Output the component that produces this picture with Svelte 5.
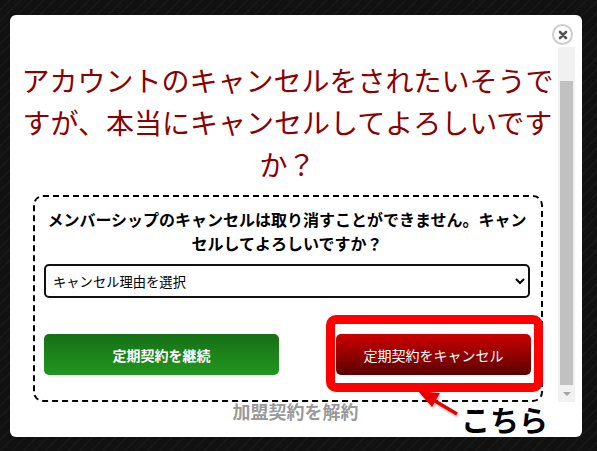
<script lang="ts">
  let reason = $state('');
</script>

<div class="overlay">
  <div class="modal">
    <div class="content">
      <h2>アカウントのキャンセルをされたいそうですが、本当にキャンセルしてよろしいですか？</h2>
      <div class="confirm-box">
        <p>メンバーシップのキャンセルは取り消すことができません。キャンセルしてよろしいですか？</p>
        <select bind:value={reason}>
          <option value="">キャンセル理由を選択</option>
        </select>
        <div class="actions">
          <button class="btn keep">定期契約を継続</button>
          <button class="btn cancel">定期契約をキャンセル</button>
        </div>
      </div>
      <div class="terminate">加盟契約を解約</div>
    </div>
    <div class="scrollbar">
      <div class="thumb"></div>
      <div class="arrow-down"></div>
    </div>

    <button class="close" aria-label="閉じる">
      <svg width="12" height="12" viewBox="0 0 12 12">
        <path d="M3 3 L9 9 M9 3 L3 9" stroke="#555" stroke-width="2.6" stroke-linecap="round" />
      </svg>
    </button>

    <div class="highlight"></div>
    <svg class="pointer" width="44" height="32" viewBox="0 0 44 32">
      <path d="M40 27 L13 11" stroke="#e60000" stroke-width="3.5" />
      <path d="M1 4 L23 6 L15 20 Z" fill="#e60000" />
    </svg>
    <span class="here">こちら</span>
  </div>
</div>

<style>
  :global(body) {
    margin: 0;
    background: #111;
  }
  .overlay {
    box-sizing: border-box;
    height: 451px;
    padding: 15px 15px 14px 10px;
    background: repeating-linear-gradient(135deg, #111 0 6px, #171717 6px 8px);
    font-family: "Noto Sans CJK JP", "Liberation Sans", sans-serif;
  }
  .modal {
    position: relative;
    display: flex;
    height: 100%;
    padding: 32px 7px 35px 10px;
    box-sizing: border-box;
    background: #fff;
    border-radius: 6px;
  }
  .content {
    flex: 1;
    min-width: 0;
    padding-top: 12px;
  }
  h2 {
    margin: 0;
    padding-right: 3px;
    font-size: 28px;
    font-weight: 400;
    line-height: 42px;
    color: #8b0000;
    text-align: center;
  }
  .confirm-box {
    box-sizing: border-box;
    width: 510px;
    height: 207px;
    margin: 10px 0 0 13px;
    padding: 10px 11px 0 9px;
    border: 2px dashed #000;
    border-radius: 10px;
  }
  p {
    margin: 0;
    font-size: 16px;
    font-weight: 700;
    line-height: 24px;
    color: #000;
    text-align: center;
  }
  select {
    display: block;
    box-sizing: border-box;
    width: 100%;
    height: 34px;
    margin-top: 9px;
    padding: 0 3px;
    border: 2px solid #111;
    border-radius: 5px;
    background: #fff;
    color: #000;
    font-family: inherit;
    font-size: 13.3px;
  }
  .actions {
    display: flex;
    justify-content: space-between;
    margin: 36px -1px 0 0;
  }
  .btn {
    height: 41px;
    padding: 0;
    border: 0;
    border-radius: 5px;
    color: #fff;
    font-family: inherit;
    font-size: 14px;
  }
  .keep {
    width: 235px;
    background: linear-gradient(#167016, #22961f);
    font-weight: 700;
  }
  .cancel {
    width: 195px;
    background: linear-gradient(#cc0000, #5a0000);
  }
  .terminate {
    margin-top: -1px;
    padding-left: 13px;
    font-size: 18px;
    font-weight: 700;
    line-height: 20px;
    color: #999;
    text-align: center;
  }
  .scrollbar {
    position: relative;
    flex: none;
    width: 17px;
    background: #f1f1f1;
  }
  .thumb {
    position: absolute;
    top: 34px;
    left: 2px;
    width: 13px;
    height: 304px;
    background: #c1c1c1;
  }
  .arrow-down {
    position: absolute;
    bottom: 6px;
    left: 5px;
    border: 4px solid transparent;
    border-top: 4px solid #a3a3a3;
    border-bottom: 0;
  }
  .close {
    position: absolute;
    top: 9px;
    right: 9px;
    display: flex;
    align-items: center;
    justify-content: center;
    box-sizing: border-box;
    width: 21px;
    height: 21px;
    padding: 0;
    border: 2px solid #ccc;
    border-radius: 50%;
    background: #fff;
  }
  .highlight {
    position: absolute;
    left: 316px;
    top: 300px;
    box-sizing: border-box;
    width: 217px;
    height: 77px;
    border: 9px solid #f00;
    border-radius: 10px;
  }
  .pointer {
    position: absolute;
    left: 407px;
    top: 372px;
    filter: drop-shadow(1px 2px 1px rgba(0, 0, 0, 0.25));
  }
  .here {
    position: absolute;
    left: 451px;
    top: 386px;
    font-size: 29px;
    font-weight: 700;
    line-height: 36px;
    color: #000;
  }
</style>
